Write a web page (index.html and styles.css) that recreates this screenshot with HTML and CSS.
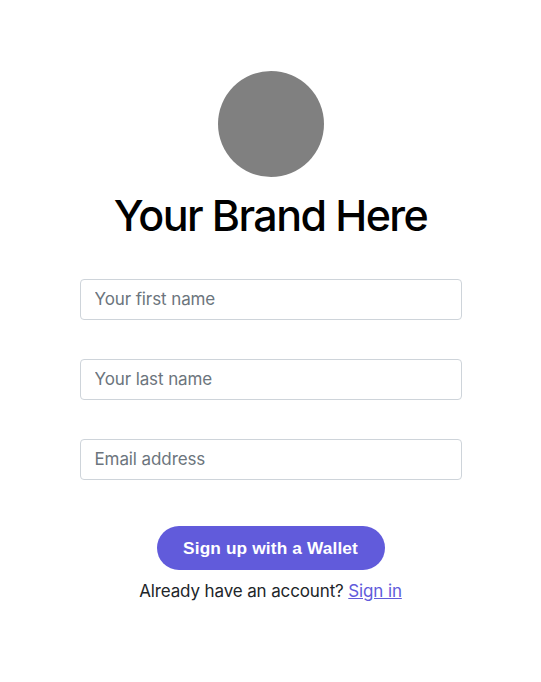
FILE: index.html
```html
<!DOCTYPE html>
<html lang="en">
<head>
<meta charset="utf-8">
<title>Sign up</title>
<link rel="stylesheet" href="styles.css">
</head>
<body>
<main class="signup">
  <div class="logo"></div>
  <h1 class="brand">Your Brand Here</h1>
  <form class="form">
    <input class="field" type="text" placeholder="Your first name" aria-label="Your first name">
    <input class="field" type="text" placeholder="Your last name" aria-label="Your last name">
    <input class="field" type="email" placeholder="Email address" aria-label="Email address">
    <button class="submit" type="button">Sign up with a Wallet</button>
  </form>
  <p class="account">Already have an account? <a class="link" href="#">Sign in</a></p>
</main>
</body>
</html>
```

FILE: styles.css
```css
* { box-sizing: border-box; }
body {
  margin: 0;
  background: #fff;
  color: #212529;
  font-family: Inter, "Liberation Sans", sans-serif;
}
.signup {
  display: flex;
  flex-direction: column;
  align-items: center;
  padding-top: 71px;
}
.logo {
  width: 106px;
  height: 106px;
  border-radius: 50%;
  background: #808080;
}
.brand {
  margin: 11px 0 37px;
  color: #000;
  font-size: 43px;
  font-weight: 500;
  line-height: 54px;
  letter-spacing: -1.6px;
  white-space: nowrap;
}
.form {
  display: flex;
  flex-direction: column;
  align-items: center;
  width: 382px;
}
.field {
  width: 100%;
  height: 41px;
  margin-bottom: 39px;
  padding: 0 14px 2px;
  border: 1px solid #ced4da;
  border-radius: 4px;
  background: #fff;
  font: 400 17px Inter, "Liberation Sans", sans-serif;
  letter-spacing: -0.1px;
}
.field::placeholder { color: #6c757d; opacity: 1; }
.submit {
  width: 228px;
  height: 44px;
  margin-top: 7px;
  padding: 1px 0 0;
  border: 0;
  border-radius: 22px;
  background: #615bdb;
  color: #fff;
  font: 700 17.3px "Liberation Sans", Arial, sans-serif;
  letter-spacing: 0.13px;
  white-space: nowrap;
}
.account {
  margin: 8px 0 0;
  font-size: 17px;
  line-height: 26px;
  letter-spacing: -0.13px;
  white-space: nowrap;
}
.link { color: #615bdb; }
```
